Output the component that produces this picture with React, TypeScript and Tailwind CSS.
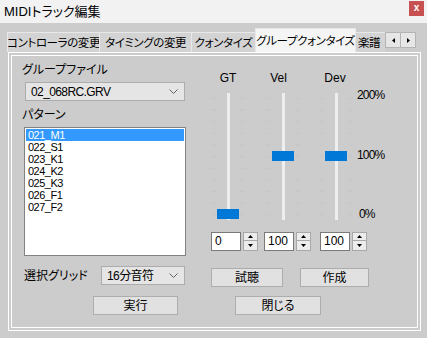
import React from "react";

const tabs = [
  { label: "コントローラの変更", w: "w-[93px]" },
  { label: "タイミングの変更", w: "w-[93px]" },
  { label: "クォンタイズ", w: "w-[65px]" },
];

const patterns = ["021_M1", "022_S1", "023_K1", "024_K2", "025_K3", "026_F1", "027_F2"];

const Chevron = () => (
  <svg width="9" height="6" viewBox="0 0 9 6" className="shrink-0">
    <polyline points="0.5,0.5 4.5,4.5 8.5,0.5" fill="none" stroke="#606060" strokeWidth="1" />
  </svg>
);

const Combo = ({ text, w }: { text: string; w: string }) => (
  <div className={`${w} h-[19px] bg-[#e5e5e5] border border-[#acacac] flex items-center justify-between pl-[5px] pr-[6px]`}>
    <span className="tracking-[-0.6px] leading-[16px] whitespace-nowrap">{text}</span>
    <Chevron />
  </div>
);

const Button = ({ text, w }: { text: string; w: string }) => (
  <div className={`${w} h-[19px] bg-[#e1e1e1] border border-[#adadad] flex items-center justify-center leading-[16px]`}>
    {text}
  </div>
);

const Slider = ({ label, value, labelClass }: { label: string; value: number; labelClass: string }) => (
  <div className="w-[38px] flex flex-col">
    <div className={`h-[16px] leading-[16px] text-center ${labelClass}`}>{label}</div>
    <div className="mt-[7px] h-[127px] relative">
      <svg width="38" height="127" className="absolute inset-0">
        {Array.from({ length: 11 }).map((_, i) => (
          <g key={i} fill="#c6c6c6">
            <rect x="2" y={5 + i * 11.6} width="5" height="1" />
            <rect x="31" y={5 + i * 11.6} width="5" height="1" />
          </g>
        ))}
      </svg>
      <div className="ml-[18px] w-[3px] h-full bg-[#eeeeee] relative" />
      <div className="absolute left-[8px] w-[22px] h-[10px] bg-[#0078d7]" style={{ top: 116 - value * 0.58 }} />
    </div>
  </div>
);

const Spin = ({ value }: { value: string }) => (
  <div className="flex h-[19px]">
    <div className="w-[30px] h-full bg-white border border-[#7a7a7a] pl-[3px] leading-[17px]">{value}</div>
    <div className="ml-[2px] w-[15px] h-full flex flex-col">
      <div className="h-[9px] bg-[#ececec] border border-[#a8a8a8] flex items-center justify-center">
        <svg width="5" height="3" viewBox="0 0 5 3"><polygon points="2.5,0 5,3 0,3" fill="#000" /></svg>
      </div>
      <div className="h-[10px] bg-[#ececec] border border-[#a8a8a8] border-t-0 flex items-center justify-center">
        <svg width="5" height="3" viewBox="0 0 5 3"><polygon points="0,0 5,0 2.5,3" fill="#000" /></svg>
      </div>
    </div>
  </div>
);

export default function App() {
  return (
    <div className="w-[427px] h-[338px] bg-[#cccccc] flex flex-col overflow-hidden text-[12px] text-black font-['Liberation_Sans','Noto_Sans_CJK_JP',sans-serif] [font-feature-settings:'palt']">
      {/* title bar */}
      <div className="h-[23px] bg-[#f2f2f2] flex items-start justify-between">
        <span className="pl-[4px] pt-[4px] text-[13px] leading-[16px]">MIDIトラック編集</span>
        <div className="mt-[1px] mr-[3px] w-[15px] h-[15px] bg-[#c75050] text-white text-[10px] font-bold leading-[14px] text-center">x</div>
      </div>

      {/* tabs */}
      <div className="h-[29px] flex items-end pl-[7px] text-[11.5px] tracking-[-0.4px] whitespace-nowrap">
        <div className="w-[378px] h-full flex items-end overflow-hidden">
          {tabs.map((t) => (
            <div key={t.label} className={`${t.w} shrink-0 h-[20px] -mr-px bg-[#d3d3d3] border border-b-0 border-[#e8e8e8] flex items-center justify-center leading-[16px] pt-px`}>
              {t.label}
            </div>
          ))}
          <div className="w-[101px] shrink-0 h-[25px] -mb-px relative z-10 bg-[#f5f5f5] border border-b-0 border-[#e8e8e8] flex items-center justify-center leading-[16px]">
            グループクォンタイズ
          </div>
          <div className="w-[40px] shrink-0 h-[20px] -ml-px bg-[#d3d3d3] border border-b-0 border-[#e8e8e8] flex items-center pl-[2px] leading-[16px] pt-px">
            楽譜
          </div>
        </div>
        <div className="self-start mt-[9px] flex">
          <div className="w-[16px] h-[16px] bg-[#e6e6e6] border border-[#b4b4b4] flex items-center justify-center">
            <svg width="3" height="5" viewBox="0 0 3 5"><polygon points="3,0 3,5 0,2.5" fill="#000" /></svg>
          </div>
          <div className="w-[16px] h-[16px] -ml-px bg-[#e6e6e6] border border-[#b4b4b4] flex items-center justify-center">
            <svg width="3" height="5" viewBox="0 0 3 5"><polygon points="0,0 3,2.5 0,5" fill="#000" /></svg>
          </div>
        </div>
      </div>

      {/* tab panel */}
      <div className="ml-[8px] w-[413px] h-[279px] border border-white p-[2px]">
        <div className="h-full border border-white pl-[10px] flex flex-col">
          <div className="flex items-start">
            {/* left column */}
            <div className="w-[164px] flex flex-col">
              <div className="pt-[6px] leading-[16px]">グループファイル</div>
              <div className="mt-[4px] ml-[3px]">
                <Combo text="02_068RC.GRV" w="w-[160px]" />
              </div>
              <div className="mt-[6px] leading-[16px]">パターン</div>
              <div className="mt-[4px] ml-[2px] w-[162px] h-[129px] bg-white border border-[#828282] p-px">
                {patterns.map((p, i) => (
                  <div
                    key={p}
                    className={`h-[12px] text-[11px] leading-[12px] pl-[2px] tracking-[-0.5px] ${i === 0 ? "bg-[#3399ff] text-white" : ""}`}
                  >
                    {p}
                  </div>
                ))}
              </div>
              <div className="mt-[10px] flex items-center">
                <div className="ml-[2px] w-[77px] leading-[16px]">選択グリッド</div>
                <Combo text="16分音符" w="w-[84px]" />
              </div>
            </div>

            {/* right column */}
            <div className="ml-[23px] flex flex-col">
              <div className="pt-[14px] flex items-start">
                <Slider label="GT" value={0} labelClass="" />
                <div className="ml-[17px]">
                  <Slider label="Vel" value={100} labelClass="pr-[9px]" />
                </div>
                <div className="ml-[15px]">
                  <Slider label="Dev" value={100} labelClass="pr-[2px]" />
                </div>
                <div className="ml-[2px] flex flex-col leading-[16px] tracking-[-0.8px]">
                  <div className="mt-[17px]">200%</div>
                  <div className="mt-[44px]">100%</div>
                  <div className="mt-[43px] pl-[2px]">0%</div>
                </div>
              </div>
              <div className="mt-[10px] flex">
                <div className="ml-[2px]">
                  <Spin value="0" />
                </div>
                <div className="ml-[6px]">
                  <Spin value="100" />
                </div>
                <div className="ml-[9px]">
                  <Spin value="100" />
                </div>
              </div>
              <div className="mt-[17px] flex">
                <div className="ml-[2px]">
                  <Button text="試聴" w="w-[72px]" />
                </div>
                <div className="ml-[17px]">
                  <Button text="作成" w="w-[69px]" />
                </div>
              </div>
            </div>
          </div>

          <div className="mt-[9px] flex">
            <div className="ml-[71px]">
              <Button text="実行" w="w-[85px]" />
            </div>
            <div className="ml-[57px]">
              <Button text="閉じる" w="w-[86px]" />
            </div>
          </div>
        </div>
      </div>
    </div>
  );
}
